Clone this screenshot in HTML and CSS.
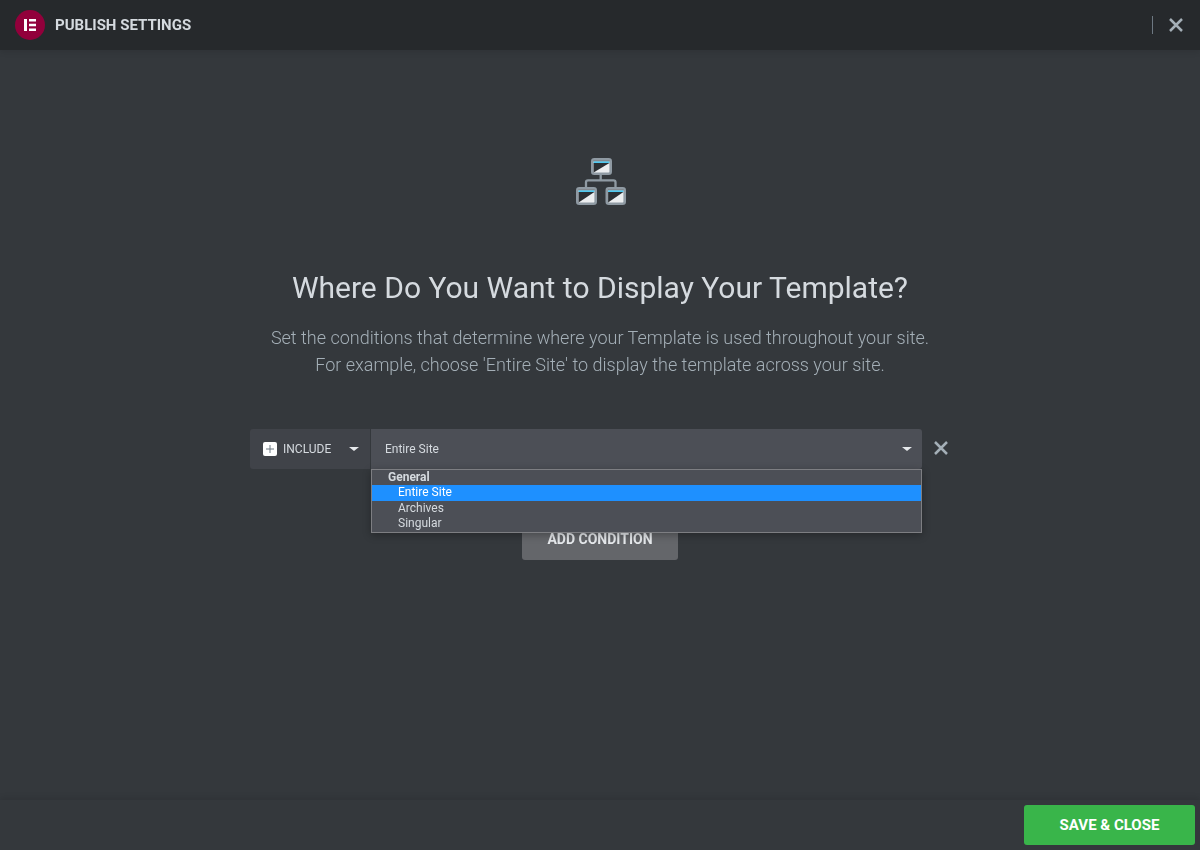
FILE: index.html
```html
<!DOCTYPE html>
<html lang="en">
<head>
<meta charset="utf-8">
<title>Publish Settings</title>
<link rel="stylesheet" href="styles.css">
</head>
<body>
<div class="modal">
  <header class="header">
    <div class="brand">
      <span class="logo">
        <svg width="30" height="30" viewBox="0 0 30 30"><circle cx="15" cy="15" r="15" fill="#92003b"/><path d="M9 9h3v12H9zM14 9h7v2.400h-7zM14 13.800h7v2.400h-7zM14 18.600h7V21h-7z" fill="#fff"/></svg>
      </span>
      <span class="title">PUBLISH SETTINGS</span>
    </div>
    <div class="header-actions">
      <span class="divider"></span>
      <svg class="close" width="14" height="14" viewBox="0 0 14 14"><path d="M1 1l12 12M13 1L1 13" stroke="#a4afb7" stroke-width="2.500" fill="none"/></svg>
    </div>
  </header>
  <main class="main">
    <svg class="hero-icon" width="52" height="48" viewBox="0 0 52 48">
      <path d="M25.700 18v5.300M11 30v-4.700a2 2 0 0 1 2-2h25.500a2 2 0 0 1 2 2V30" stroke="#8f9aa3" stroke-width="2.300" fill="none"/>
      <rect x="17.300" y="2.300" width="18.400" height="14.400" rx="2" fill="#eceef0" stroke="#8f9aa3" stroke-width="2.600"/>
      <path d="M18.600 3.600h15.800v.8H18.600z" fill="#2b2f33"/>
      <path d="M18.600 4.400h15.800V6H18.600z" fill="#4dc8f0"/>
      <path d="M18.600 6h15.800L18.600 15.400z" fill="#2b2f33"/>
      <rect x="2.300" y="31.300" width="18.400" height="15.400" rx="2" fill="#eceef0" stroke="#8f9aa3" stroke-width="2.600"/>
      <path d="M3.600 32.600h15.800v.8H3.600z" fill="#2b2f33"/>
      <path d="M3.600 33.400h15.800V35H3.600z" fill="#4dc8f0"/>
      <path d="M3.600 35h15.800L3.600 45.400z" fill="#2b2f33"/>
      <rect x="31.800" y="31.300" width="17.900" height="15.400" rx="2" fill="#eceef0" stroke="#8f9aa3" stroke-width="2.600"/>
      <path d="M33.100 32.600h15.300v.8H33.100z" fill="#2b2f33"/>
      <path d="M33.100 33.400h15.300V35H33.100z" fill="#4dc8f0"/>
      <path d="M33.100 35h15.300L33.100 45.400z" fill="#2b2f33"/>
    </svg>
    <h1 class="heading">Where Do You Want to Display Your Template?</h1>
    <p class="desc">Set the conditions that determine where your Template is used throughout your site.<br>For example, choose 'Entire Site' to display the template across your site.</p>
    <div class="condition">
      <div class="include">
        <span class="plus"><svg width="8" height="8" viewBox="0 0 8 8"><path d="M4 0v8M0 4h8" stroke="#6d7882" stroke-width="1"/></svg></span>
        <span class="include-label">INCLUDE</span>
        <span class="caret"></span>
      </div>
      <div class="select">
        <span class="select-value">Entire Site</span>
        <span class="caret"></span>
        <ul class="dropdown">
          <li class="group">General</li>
          <li class="item active">Entire Site</li>
          <li class="item">Archives</li>
          <li class="item">Singular</li>
        </ul>
      </div>
      <svg class="remove" width="14" height="14" viewBox="0 0 14 14"><path d="M1 1l12 12M13 1L1 13" stroke="#a4afb7" stroke-width="2.500" fill="none"/></svg>
    </div>
    <button class="add"><span class="add-label">ADD CONDITION</span></button>
  </main>
  <footer class="footer">
    <button class="save">SAVE &amp; CLOSE</button>
  </footer>
</div>
</body>
</html>
```
FILE: styles.css
```css
* { box-sizing: border-box; }
html, body { margin: 0; height: 100%; }
body { font-family: Roboto, "Liberation Sans", sans-serif; background: #34383c; overflow: hidden; }
.modal { width: 1200px; height: 850px; display: flex; flex-direction: column; background: #34383c; }
.header { height: 50px; flex: none; background: #26292c; box-shadow: 0 2px 6px rgba(0,0,0,.1); display: flex; align-items: center; justify-content: space-between; padding: 0 17px 0 15px; position: relative; }
.brand { display: flex; align-items: center; gap: 10px; }
.logo { width: 30px; height: 30px; display: block; }
.logo svg { display: block; }
.title { font-size: 15px; font-weight: 700; color: #d5dadf; line-height: 1; }
.title, .heading, .desc, .include-label, .select-value, .add-label { will-change: opacity; }
.header-actions { display: flex; align-items: center; gap: 16px; }
.divider { width: 1px; height: 18px; background: #6d7882; }
.close { display: block; }
.main { flex: 1; display: flex; flex-direction: column; align-items: center; padding-top: 107px; }
.hero-icon { display: block; margin-left: 2px; }
.heading { margin: 65px 0 0; font-size: 30px; font-weight: 400; line-height: 36px; color: #d5dadf; text-align: center; }
.desc { margin: 18px 0 0; font-size: 18px; font-weight: 300; line-height: 27px; color: #a4afb7; text-align: center; }
.condition { margin-top: 51px; width: 700px; display: flex; align-items: center; height: 40px; gap: 1px; }
.include { width: 120px; height: 40px; background: #404349; border-radius: 3px 0 0 3px; display: flex; align-items: center; padding-left: 13px; color: #d5dadf; font-size: 12px; }
.plus { width: 14px; height: 14px; background: #fff; border-radius: 2px; display: flex; align-items: center; justify-content: center; margin-right: 6px; }
.plus svg { display: block; }
.include-label { width: 66px; }
.caret { width: 0; height: 0; border-left: 5px solid transparent; border-right: 5px solid transparent; border-top: 4px solid #e6e9ec; }
.select { position: relative; width: 551px; height: 40px; background: #4c4f56; border-radius: 0 3px 3px 0; display: flex; align-items: center; justify-content: space-between; padding: 0 10px 0 14px; color: #d5dadf; font-size: 12px; }
.dropdown { position: absolute; left: 0; top: 40px; width: 551px; height: 64px; margin: 0; padding: 0; list-style: none; background: #4c4f56; border: 1px solid #7d7e82; box-shadow: 0 2px 8px rgba(0,0,0,.3); font-size: 12px; line-height: 15.500px; z-index: 2; }
.group { font-weight: 700; padding-left: 16px; color: #d5dadf; height: 15px; }
.item { padding-left: 26px; color: #d5dadf; height: 15.500px; }
.item.active { background: #1e90ff; color: #fff; }
.remove { margin-left: 11px; margin-bottom: 3px; display: block; }
.add { margin-top: 49px; width: 156px; height: 42px; border: 0; border-radius: 3px; background: #64666a; color: #e6e9ec; font: 700 14px Roboto, sans-serif; padding: 0; }
.footer { height: 50px; flex: none; background: #34383c; box-shadow: 0 -2px 6px rgba(0,0,0,.1); display: flex; align-items: center; justify-content: flex-end; padding: 5px 5px 5px 0; }
.save { width: 171px; height: 40px; border: 0; border-radius: 3px; background: #39b54a; color: #fff; font: 700 15px Roboto, sans-serif; padding: 0; }
```
